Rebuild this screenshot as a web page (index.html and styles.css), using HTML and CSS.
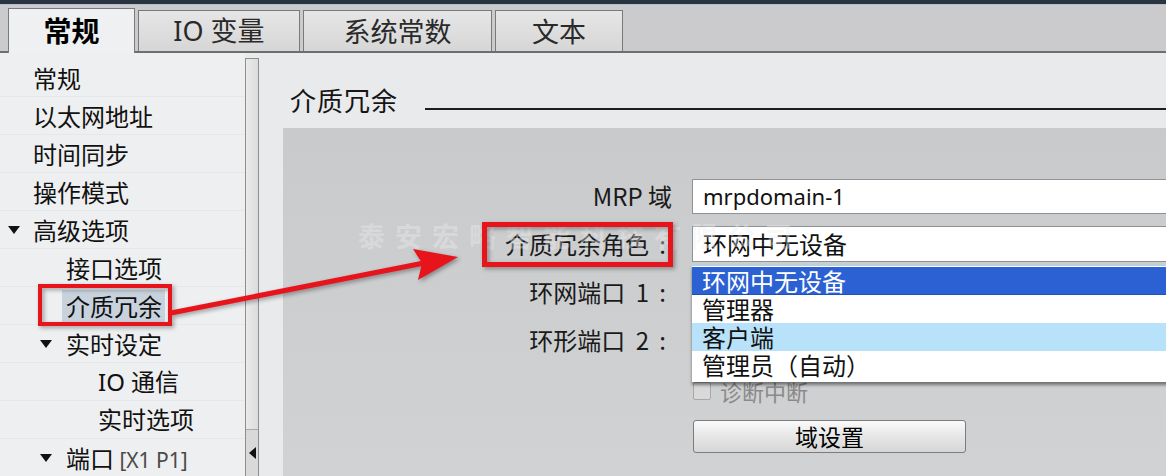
FILE: index.html
```html
<!DOCTYPE html>
<html lang="zh-CN">

<head>
  <meta charset="UTF-8">
  <meta name="viewport" content="width=device-width, initial-scale=1.0">
  <title>介质冗余</title>
  <link rel="stylesheet" href="styles.css">
</head>

<body>
  <div class="topbar"></div>
  <div class="tabs">
    <div class="tab active">常规</div>
    <div class="tab tab-io">IO 变量</div>
    <div class="tab tab-const">系统常数</div>
    <div class="tab tab-text">文本</div>
  </div>

  <div class="main">
    <ul class="tree">
      <li class="lvl0">常规</li>
      <li class="lvl0">以太网地址</li>
      <li class="lvl0">时间同步</li>
      <li class="lvl0">操作模式</li>
      <li class="lvl0"><span class="caret"></span>高级选项</li>
      <li class="lvl1">接口选项</li>
      <li class="lvl1"><span class="selected">介质冗余</span></li>
      <li class="lvl1"><span class="caret"></span>实时设定</li>
      <li class="lvl2">IO 通信</li>
      <li class="lvl2">实时选项</li>
      <li class="lvl1"><span class="caret"></span>端口 <span class="port-id">[X1 P1]</span></li>
    </ul>

    <div class="scrollbar">
      <div class="scroll-btn"><span class="arrow-left"></span></div>
    </div>

    <div class="content">
      <div class="section-title">
        <span>介质冗余</span>
        <div class="rule"></div>
      </div>

      <div class="panel">
        <div class="form">
          <label>MRP 域</label>
          <div class="field">
            <div class="input">mrpdomain-1</div>
          </div>

          <label class="colon">介质冗余角色 :</label>
          <div class="field select-wrap">
            <div class="select">环网中无设备</div>
            <ul class="dropdown">
              <li class="current">环网中无设备</li>
              <li>管理器</li>
              <li class="hover">客户端</li>
              <li>管理员（自动）</li>
            </ul>
          </div>

          <label class="colon">环网端口 1 :</label>
          <div class="field"></div>

          <label class="colon">环形端口 2 :</label>
          <div class="field"></div>

          <div></div>
          <div class="field check-row">
            <span class="checkbox"></span>
            <span class="check-label">诊断中断</span>
          </div>

          <div></div>
          <div class="field">
            <button type="button">域设置</button>
          </div>
        </div>
      </div>
    </div>
  </div>

  <!-- annotations drawn over the screenshot -->
  <div class="watermark">泰安宏略智能科技有限公司</div>
  <svg class="marks" width="1166" height="476" viewBox="0 0 1166 476">
    <rect x="40" y="286" width="130" height="38" fill="none" stroke="#e8141c" stroke-width="4" />
    <rect x="484.5" y="224.5" width="186" height="40" fill="none" stroke="#e8141c" stroke-width="5" />
    <line x1="171" y1="313" x2="424" y2="263" stroke="#e8141c" stroke-width="5" />
    <polygon points="458,257 413,249 422,263 418,280" fill="#e8141c" />
  </svg>
</body>

</html>
```

FILE: styles.css
```css
body {
  margin: 0;
  width: 1166px;
  height: 476px;
  overflow: hidden;
  background-color: #e9eaeb;
  font-family: "Noto Sans", "Noto Sans CJK SC", sans-serif;
  color: #111;
  position: relative;
}

.topbar {
  height: 4px;
  background-color: #28343f;
  border-bottom: 1px solid #b4bfcc;
}

.tabs {
  height: 46px;
  background-color: #cbcbcd;
  border-bottom: 2px solid #6e6e6e;
  display: flex;
  align-items: flex-end;
  gap: 3px;
  padding-left: 8px;
}

.tab {
  box-sizing: border-box;
  height: 41px;
  border: 1px solid #7a7a7a;
  border-bottom: none;
  background: linear-gradient(#e6e6e7, #d6d6d7);
  font-family: "Noto Sans CJK SC", sans-serif;
  font-size: 27px;
  line-height: 40px;
  text-align: center;
  color: #2a2a2a;
}

.tab.active {
  width: 127px;
  height: 45px;
  margin-bottom: -2px;
  background: #eff0f1;
  font-weight: bold;
  font-size: 28px;
  line-height: 42px;
  color: #000;
}

.tab-io {
  width: 162px;
  font-family: "Noto Sans", "Noto Sans CJK SC", sans-serif;
}

.tab-const {
  width: 189px;
}

.tab-text {
  width: 128px;
}

.main {
  display: flex;
  height: 423px;
}

.tree {
  list-style: none;
  margin: 0;
  padding: 6px 0 0 0;
  width: 245px;
  background-color: #eeeff0;
}

.tree li {
  box-sizing: border-box;
  height: 38px;
  line-height: 37px;
  font-size: 24px;
  font-family: "Noto Sans CJK SC", sans-serif;
  border-bottom: 1px solid #e6e7e8;
  white-space: nowrap;
  position: relative;
}

.lvl0 {
  padding-left: 33px;
}

.lvl1 {
  padding-left: 66px;
}

.lvl2 {
  padding-left: 98px;
}

.tree .lvl2 {
  font-family: "Noto Sans", "Noto Sans CJK SC", sans-serif;
}

.caret {
  position: absolute;
  top: 15px;
  width: 0;
  height: 0;
  border-left: 6px solid transparent;
  border-right: 6px solid transparent;
  border-top: 8px solid #111;
}

.lvl0 .caret {
  left: 8px;
}

.lvl1 .caret {
  left: 40px;
}

.selected {
  background-color: #c8d2dd;
  display: inline-block;
  line-height: 32px;
  padding: 0 3px 0 4px;
  margin-left: -4px;
}

.port-id {
  font-family: "Noto Sans", sans-serif;
  font-size: 21px;
  color: #4a4a4a;
}

.scrollbar {
  box-sizing: border-box;
  width: 14px;
  margin-top: 5px;
  border: 1px solid #8e8e8e;
  border-bottom: none;
  background: linear-gradient(to right, #eaeaea, #dcdcdc);
  display: flex;
  flex-direction: column;
  justify-content: flex-end;
}

.scroll-btn {
  height: 46px;
  border-top: 1px solid #a9a9a9;
  background-color: #d9d9d9;
  display: flex;
  align-items: center;
  justify-content: center;
}

.arrow-left {
  width: 0;
  height: 0;
  border-top: 6px solid transparent;
  border-bottom: 6px solid transparent;
  border-right: 7px solid #111;
}

.content {
  flex: 1;
  display: flex;
  flex-direction: column;
  margin-left: 3px;
}

.section-title {
  display: flex;
  align-items: flex-start;
  gap: 27px;
  padding: 30px 0 0 28px;
  height: 34px;
  margin-bottom: 11px;
}

.section-title span {
  font-family: "Noto Sans CJK SC", sans-serif;
  font-size: 26px;
  line-height: 34px;
  letter-spacing: 1px;
  color: #151515;
}

.rule {
  flex: 1;
  height: 2px;
  margin-top: 25px;
  background-color: #1e1e1e;
}

.panel {
  flex: 1;
  margin-left: 21px;
  padding-top: 44px;
  background: linear-gradient(#c9cacc, #d1d2d3);
}

.form {
  display: grid;
  grid-template-columns: 389px 1fr;
  grid-auto-rows: 48px;
  column-gap: 20px;
}

.form label {
  font-family: "Noto Sans CJK SC", sans-serif;
  font-size: 24px;
  line-height: 48px;
  text-align: right;
  color: #1a1a1a;
  white-space: nowrap;
}

.form .colon {
  word-spacing: 5px;
  padding-right: 6px;
}

.field {
  display: flex;
  align-items: center;
}

.input,
.select {
  box-sizing: border-box;
  width: 100%;
  background-color: #fff;
  border: 1px solid #8f9297;
  border-right: none;
  padding-left: 10px;
  color: #111;
}

.input {
  height: 35px;
  font-size: 22px;
  line-height: 32px;
}

.select {
  height: 36px;
  font-family: "Noto Sans CJK SC", sans-serif;
  font-size: 24px;
  line-height: 33px;
}

.select-wrap {
  position: relative;
}

.dropdown {
  position: absolute;
  top: 45px;
  left: 0;
  right: -10px;
  margin: 0;
  padding: 1px 0 3px 0;
  list-style: none;
  background-color: #fff;
  border-top: 1px solid #a9d4ee;
  box-shadow: 0 3px 3px rgba(0, 0, 0, 0.45);
  z-index: 2;
}

.dropdown li {
  height: 28px;
  line-height: 27px;
  padding-left: 10px;
  font-family: "Noto Sans CJK SC", sans-serif;
  font-size: 24px;
  color: #111;
}

.dropdown .current {
  background-color: #2b61d2;
  color: #fff;
  border-bottom: 1px solid #1f4fb8;
  height: 27px;
}

.dropdown .hover {
  background-color: #b8e2f9;
}

.check-row {
  gap: 9px;
  padding-left: 1px;
  padding-top: 6px;
}

.checkbox {
  box-sizing: border-box;
  width: 18px;
  height: 18px;
  border: 1px solid #a8a8a8;
  border-radius: 2px;
  background-color: #d9d9da;
}

.check-label {
  font-family: "Noto Sans CJK SC", sans-serif;
  font-size: 22px;
  color: #8a8a8a;
}

button {
  width: 273px;
  height: 33px;
  margin-left: 1px;
  border: 1px solid #7c7c7c;
  border-radius: 3px;
  background: linear-gradient(#fafafa, #e6e6e6 50%, #d6d6d6);
  font-family: "Noto Sans CJK SC", sans-serif;
  font-size: 23px;
  line-height: 28px;
  color: #000;
  padding: 0;
}

.watermark {
  position: absolute;
  left: 358px;
  top: 216px;
  font-family: "Noto Sans CJK SC", sans-serif;
  font-weight: bold;
  font-size: 27px;
  letter-spacing: 10px;
  color: rgba(238, 238, 240, 0.4);
  white-space: nowrap;
  pointer-events: none;
}

.marks {
  position: absolute;
  left: 0;
  top: 0;
  pointer-events: none;
  filter: drop-shadow(2px 2px 2px rgba(0, 0, 0, 0.35));
}
```
